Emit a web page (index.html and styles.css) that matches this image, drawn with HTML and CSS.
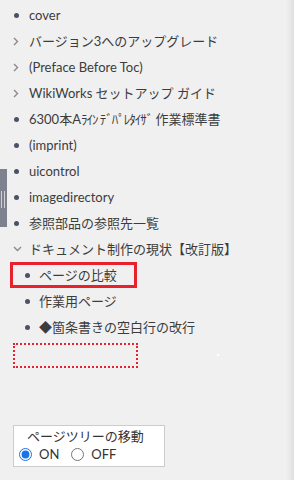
FILE: index.html
```html
<!DOCTYPE html>
<html lang="ja">
<head>
<meta charset="utf-8">
<link rel="stylesheet" href="styles.css">
</head>
<body>
<div class="page">
  <div class="grip"><span class="grip-lines"></span></div>
  <ul class="tree">
    <li class="row"><span class="mark"><span class="dot"></span></span><span class="label">cover</span></li>
    <li class="row"><span class="mark"><svg class="chev" width="6" height="9" viewBox="0 0 6 9"><path d="M1 1l3.5 3.5L1 8" fill="none" stroke="#8a8a8a" stroke-width="1.4"/></svg></span><span class="label">バージョン3へのアップグレード</span></li>
    <li class="row"><span class="mark"><svg class="chev" width="6" height="9" viewBox="0 0 6 9"><path d="M1 1l3.5 3.5L1 8" fill="none" stroke="#8a8a8a" stroke-width="1.4"/></svg></span><span class="label">(Preface Before Toc)</span></li>
    <li class="row"><span class="mark"><svg class="chev" width="6" height="9" viewBox="0 0 6 9"><path d="M1 1l3.5 3.5L1 8" fill="none" stroke="#8a8a8a" stroke-width="1.4"/></svg></span><span class="label">WikiWorks セットアップ ガイド</span></li>
    <li class="row"><span class="mark"><span class="dot"></span></span><span class="label">6300本A<span class="hw">ﾗｲﾝ ﾃﾞﾊﾟﾚﾀｲｻﾞ</span> 作業標準書</span></li>
    <li class="row"><span class="mark"><span class="dot"></span></span><span class="label">(imprint)</span></li>
    <li class="row"><span class="mark"><span class="dot"></span></span><span class="label">uicontrol</span></li>
    <li class="row"><span class="mark"><span class="dot"></span></span><span class="label">imagedirectory</span></li>
    <li class="row"><span class="mark"><span class="dot"></span></span><span class="label">参照部品の参照先一覧</span></li>
    <li class="row"><span class="mark"><svg class="chev" width="9" height="6" viewBox="0 0 9 6"><path d="M1 1l3.5 3.5L8 1" fill="none" stroke="#8a8a8a" stroke-width="1.4"/></svg></span><span class="label">ドキュメント制作の現状【改訂版】</span></li>
    <li class="child-wrap">
      <ul class="children">
        <li class="row child selected"><span class="mark"><span class="dot"></span></span><span class="label">ページの比較</span></li>
        <li class="row child"><span class="mark"><span class="dot"></span></span><span class="label">作業用ページ</span></li>
        <li class="row child"><span class="mark"><span class="dot"></span></span><span class="label">◆箇条書きの空白行の改行</span></li>
      </ul>
    </li>
  </ul>
  <div class="drop-zone"></div>
  <fieldset class="move-box">
    <div class="move-title">ページツリーの移動</div>
    <div class="radios">
      <label class="opt"><input type="radio" name="mv" checked> ON</label>
      <label class="opt"><input type="radio" name="mv"> OFF</label>
    </div>
  </fieldset>
  <span class="speck"></span>
</div>
</body>
</html>
```

FILE: styles.css
```css
html, body {
  margin: 0;
  padding: 0;
  background: #f0f0f0;
}
body {
  width: 294px;
  height: 480px;
  overflow: hidden;
  font-family: "Lato", "Noto Sans CJK JP", sans-serif;
  font-size: 13px;
  color: #3c3c3c;
}
.page {
  position: relative;
  height: 480px;
  padding-top: 2px;
  box-sizing: border-box;
  background: linear-gradient(to right, #f0f0f0 0, #f0f0f0 286px, #e6e6e6 291px, #dedede 294px);
}
.grip {
  position: absolute;
  left: 0;
  top: 169px;
  width: 7px;
  height: 58px;
  background: #7d828e;
}
.grip-lines {
  position: absolute;
  left: 1px;
  top: 22px;
  width: 1px;
  height: 17px;
  background: #d0d2d6;
  box-shadow: 3px 0 0 #d0d2d6;
}
.tree, .children {
  list-style: none;
  margin: 0;
  padding: 0;
}
.row {
  display: flex;
  align-items: center;
  height: 26px;
  line-height: 26px;
  white-space: nowrap;
}
.mark {
  width: 29px;
  display: flex;
  align-items: center;
  padding-left: 13px;
  box-sizing: border-box;
}
.dot {
  width: 5px;
  height: 5px;
  border-radius: 50%;
  background: #4b5169;
  margin-left: 1px;
}
.hw {
  letter-spacing: -1px;
}
.child .mark {
  width: 39px;
  padding-left: 24px;
}
.selected {
  margin-left: 10px;
  width: 127px;
  box-sizing: border-box;
  border: 3px solid #e8222c;
  height: 26px;
}
.selected .mark {
  width: 26px;
  padding-left: 11px;
}
.drop-zone {
  margin: 3px 0 0 13px;
  width: 125px;
  height: 25px;
  box-sizing: border-box;
  border: 2px dotted #e8222c;
}
.move-box {
  margin: 57px 0 0 13px;
  width: 152px;
  height: 42px;
  box-sizing: border-box;
  border: 1px solid #cccccc;
  background: #ffffff;
  padding: 0 0 0 5px;
}
.move-title {
  padding-left: 8px;
  line-height: 18px;
  margin-top: 1px;
  color: #333;
}
.radios {
  display: flex;
  gap: 12px;
  line-height: 18px;
}
.opt {
  display: flex;
  align-items: center;
  color: #333;
}
.opt input {
  margin: 0 7px 0 0;
  width: 13px;
  height: 13px;
  accent-color: #1a73e8;
}
.speck {
  position: absolute;
  left: 217px;
  top: 354px;
  width: 2px;
  height: 2px;
  background: #ffffff;
}
```
